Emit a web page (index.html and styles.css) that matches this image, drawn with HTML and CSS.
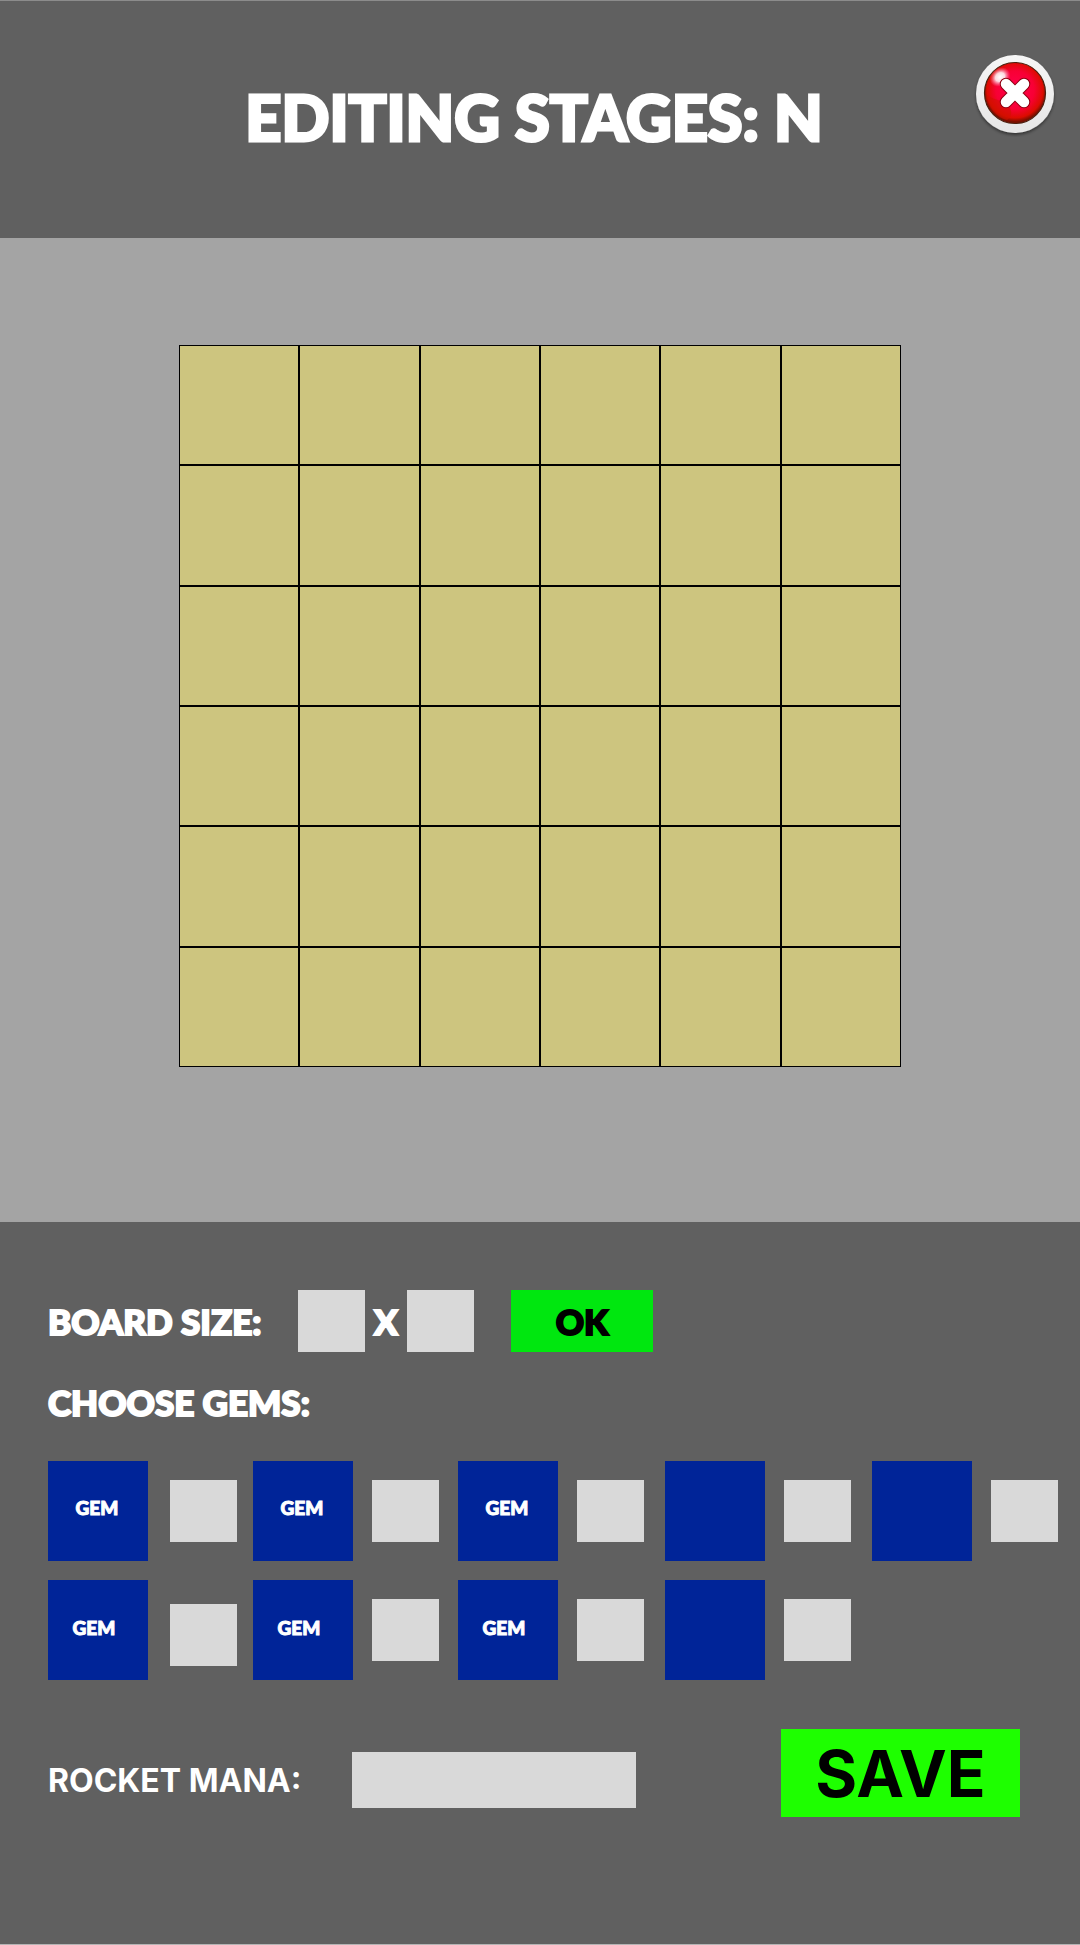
FILE: index.html
```html
<!DOCTYPE html>
<html lang="en">
<head>
<meta charset="utf-8">
<meta name="viewport" content="width=device-width, initial-scale=1">
<title>Editing Stages</title>
<link rel="stylesheet" href="styles.css">
</head>
<body>
<div class="page">
  <header class="header">
    <h1 class="title">EDITING STAGES: N</h1>
    <button class="close" type="button" aria-label="Close">
      <svg class="close-icon" viewBox="0 0 84 84" aria-hidden="true">
        <defs>
          <radialGradient id="glow" cx="50%" cy="45%" r="52%">
            <stop offset="0" stop-color="#ff0050"/>
            <stop offset="0.6" stop-color="#f80034"/>
            <stop offset="0.88" stop-color="#dc0c00"/>
            <stop offset="1" stop-color="#7a1000"/>
          </radialGradient>
          <radialGradient id="shine">
            <stop offset="0" stop-color="#fff"/>
            <stop offset="0.45" stop-color="#fff" stop-opacity="0.85"/>
            <stop offset="1" stop-color="#ff80b0" stop-opacity="0"/>
          </radialGradient>
          <linearGradient id="ring" x1="0" y1="0" x2="0" y2="1">
            <stop offset="0" stop-color="#f6f6f6"/>
            <stop offset="1" stop-color="#e6e6e6"/>
          </linearGradient>
          <filter id="drop" x="-10%" y="-10%" width="120%" height="125%">
            <feDropShadow dx="0" dy="2" stdDeviation="1.4" flood-color="#000" flood-opacity="0.45"/>
          </filter>
        </defs>
        <circle cx="42" cy="41" r="39" fill="url(#ring)" filter="url(#drop)"/>
        <circle cx="42" cy="40" r="30.5" fill="url(#glow)" stroke="#4c2010" stroke-width="1.2"/>
        <path d="M14 42a28 28 0 0 0 20 25c8-5 4-16-6-19-6-2-10-3-14-6z" fill="#d01000" opacity="0.6"/>
        <ellipse cx="27" cy="24" rx="11" ry="9" transform="rotate(-38 27 24)" fill="url(#shine)"/>
        <path d="M33 31L51 49M51 31L33 49" stroke="#8c0010" stroke-width="12.500" stroke-linecap="round"/>
        <path d="M33 31L51 49M51 31L33 49" stroke="#fff" stroke-width="10.500" stroke-linecap="round"/>
      </svg>
    </button>
  </header>

  <main class="stage">
    <div class="board">
      <i></i><i></i><i></i><i></i><i></i><i></i>
      <i></i><i></i><i></i><i></i><i></i><i></i>
      <i></i><i></i><i></i><i></i><i></i><i></i>
      <i></i><i></i><i></i><i></i><i></i><i></i>
      <i></i><i></i><i></i><i></i><i></i><i></i>
      <i></i><i></i><i></i><i></i><i></i><i></i>
    </div>
  </main>

  <form class="controls">
    <div class="size-row">
      <label class="label size-label" for="cols">BOARD SIZE:</label>
      <input class="field" id="cols" type="text">
      <label class="label times" for="rows">X</label>
      <input class="field" id="rows" type="text">
      <button class="label ok" type="button">OK</button>
    </div>

    <h2 class="label gems-title">CHOOSE GEMS:</h2>

    <div class="gems">
      <div class="gem-item first"><label class="gem" for="g1">GEM</label><input class="field" id="g1" type="text"></div>
      <div class="gem-item"><label class="gem" for="g2">GEM</label><input class="field" id="g2" type="text"></div>
      <div class="gem-item"><label class="gem" for="g3">GEM</label><input class="field" id="g3" type="text"></div>
      <div class="gem-item"><label class="gem" for="g4"></label><input class="field" id="g4" type="text"></div>
      <div class="gem-item"><label class="gem" for="g5"></label><input class="field" id="g5" type="text"></div>
      <div class="gem-item first low"><label class="gem alt" for="g6">GEM</label><input class="field" id="g6" type="text"></div>
      <div class="gem-item"><label class="gem alt" for="g7">GEM</label><input class="field" id="g7" type="text"></div>
      <div class="gem-item"><label class="gem alt" for="g8">GEM</label><input class="field" id="g8" type="text"></div>
      <div class="gem-item"><label class="gem" for="g9"></label><input class="field" id="g9" type="text"></div>
    </div>

    <div class="mana-row">
      <label class="mana-label" for="mana">ROCKET MANA:</label>
      <input class="field mana" id="mana" type="text">
      <button class="save" type="submit">SAVE</button>
    </div>
  </form>
</div>
</body>
</html>
```
FILE: styles.css
```css
* {
  box-sizing: border-box;
}

body {
  margin: 0;
  background: #606060;
  color: #fff;
  font-family: Lato, "Open Sans", sans-serif;
}

button,
input {
  border: 0;
  border-radius: 0;
  padding: 0;
  font: inherit;
}

button {
  cursor: pointer;
}

.page {
  display: flex;
  flex-direction: column;
  min-height: 100vh;
  border-top: 1px solid #8c8c8c;
  border-bottom: 1px solid #b4b4b4;
}

.header {
  position: relative;
  padding: 76px 160px 81px 148px;
  text-align: center;
}

.title {
  margin: 0;
  font-size: 63px;
  line-height: 80px;
  font-weight: 900;
  -webkit-text-stroke: 3px currentColor;
}

.close {
  position: absolute;
  top: 52px;
  right: 23px;
  width: 84px;
  height: 84px;
  background: none;
}

.close-icon {
  display: block;
  width: 100%;
  height: 100%;
  fill: none;
}

.stage {
  padding: 107px 24px 155px;
  background: #a4a4a4;
}

.board {
  display: grid;
  grid-template-columns: repeat(6, 1fr);
  gap: 2px;
  max-width: 722px;
  margin: 0 auto;
  padding: 1px;
  background: #000;
}

.board i {
  aspect-ratio: 1;
  background: #cdc57f;
}

.controls {
  flex: 1;
  padding: 68px 22px 60px 48px;
}

.label {
  margin: 0;
  font-size: 35px;
  line-height: 40px;
  font-weight: 900;
  -webkit-text-stroke: 2px currentColor;
}

.field {
  flex: none;
  width: 67px;
  height: 62px;
  background: #d9d9d9;
  color: #000;
  font-size: 32px;
  text-align: center;
}

.size-row {
  display: flex;
  align-items: center;
}

.size-label {
  width: 250px;
  white-space: nowrap;
}

.times {
  width: 42px;
  text-align: center;
}

.ok {
  width: 142px;
  height: 62px;
  margin-left: 37px;
  background: #00e70f;
  color: #000;
}

.gems-title {
  margin-top: 30px;
}

.gems {
  display: grid;
  grid-template-columns: 205fr 205fr 207fr 207fr 186px;
  row-gap: 19px;
  margin-top: 39px;
}

.gem-item {
  display: flex;
  align-items: center;
  gap: 19px;
}

.first {
  gap: 22px;
}

.low .field {
  margin-top: 10px;
}

.gem {
  display: flex;
  align-items: center;
  justify-content: center;
  width: 100px;
  height: 100px;
  padding: 0 2px 8px 0;
  background: #002498;
  font-size: 19px;
  font-weight: 900;
  -webkit-text-stroke: 1px currentColor;
}

.alt {
  padding: 0 8px 6px 0;
}

.mana-row {
  display: flex;
  align-items: center;
  margin-top: 49px;
  padding-right: 38px;
  font-family: Inter, sans-serif;
}

.mana-label {
  width: 304px;
  padding-top: 16px;
  font-size: 32px;
  line-height: 40px;
  font-weight: 700;
}

.mana {
  width: 284px;
  height: 56px;
  margin-top: 14px;
}

.save {
  width: 239px;
  height: 88px;
  margin-left: auto;
  background: #1eff00;
  color: #000;
  font-size: 64px;
  font-weight: 700;
}
```
